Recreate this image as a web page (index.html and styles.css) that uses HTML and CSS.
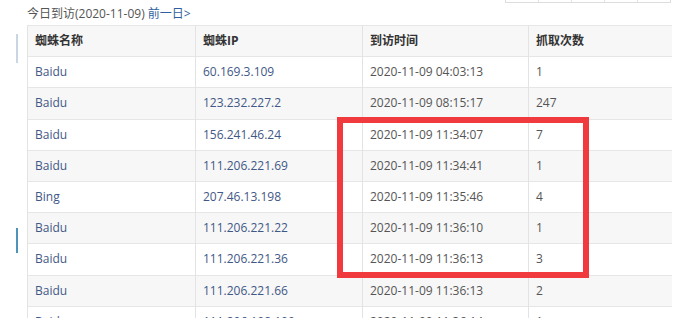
FILE: index.html
```html
<!DOCTYPE html>
<html lang="zh-CN">
<head>
<meta charset="utf-8">
<title>今日到访</title>
<link rel="stylesheet" href="styles.css">
</head>
<body>
<div class="page">
  <div class="gutter">
    <div class="mark mark-light"></div>
    <div class="mark mark-dark"></div>
  </div>
  <div class="main">
    <div class="pager"><span></span><span></span><span></span><span></span><span></span></div>
    <div class="title">今日到访(2020-11-09) <a class="prev">前一日&gt;</a></div>
    <table class="spiders">
      <colgroup><col class="c1"><col class="c2"><col class="c3"><col class="c4"></colgroup>
      <thead>
        <tr><th>蜘蛛名称</th><th>蜘蛛IP</th><th>到访时间</th><th>抓取次数</th></tr>
      </thead>
      <tbody>
        <tr><td class="lnk">Baidu</td><td class="lnk">60.169.3.109</td><td>2020-11-09 04:03:13</td><td>1</td></tr>
        <tr><td class="lnk">Baidu</td><td class="lnk">123.232.227.2</td><td>2020-11-09 08:15:17</td><td>247</td></tr>
        <tr><td class="lnk">Baidu</td><td class="lnk">156.241.46.24</td><td>2020-11-09 11:34:07</td><td>7</td></tr>
        <tr><td class="lnk">Baidu</td><td class="lnk">111.206.221.69</td><td>2020-11-09 11:34:41</td><td>1</td></tr>
        <tr><td class="lnk">Bing</td><td class="lnk">207.46.13.198</td><td>2020-11-09 11:35:46</td><td>4</td></tr>
        <tr><td class="lnk">Baidu</td><td class="lnk">111.206.221.22</td><td>2020-11-09 11:36:10</td><td>1</td></tr>
        <tr><td class="lnk">Baidu</td><td class="lnk">111.206.221.36</td><td>2020-11-09 11:36:13</td><td>3</td></tr>
        <tr><td class="lnk">Baidu</td><td class="lnk">111.206.221.66</td><td>2020-11-09 11:36:13</td><td>2</td></tr>
        <tr><td class="lnk">Baidu</td><td class="lnk">111.206.198.109</td><td>2020-11-09 11:36:14</td><td>1</td></tr>
      </tbody>
    </table>
    <div class="highlight"></div>
  </div>
</div>
</body>
</html>
```

FILE: styles.css
```css
html, body {
  margin: 0;
  padding: 0;
  background: #ffffff;
  height: 326px;
  overflow: hidden;
}
body {
  font-family: "Open Sans", "Noto Sans CJK SC", sans-serif;
  font-size: 12px;
  color: #555555;
}
.page {
  display: flex;
  position: relative;
  height: 318px;
  overflow: hidden;
}
.gutter {
  width: 16px;
  padding-right: 11px;
  flex: none;
}
.mark {
  width: 2px;
  margin-left: 16px;
}
.mark-light {
  margin-top: 34px;
  height: 29px;
  background: #c9d6e3;
}
.mark-dark {
  margin-top: 165px;
  height: 25px;
  background: #4f94b8;
}
.main {
  flex: none;
  width: 644px;
}
.pager {
  display: flex;
  margin-left: 478px;
  width: 164px;
  height: 2px;
  border: 1px solid #dddddd;
  border-top: none;
}
.pager span {
  flex: 1;
  border-left: 1px solid #e2e2e2;
}
.pager span:first-child {
  border-left: none;
}
.title {
  height: 22px;
  line-height: 22px;
  color: #555555;
  white-space: nowrap;
}
.prev {
  color: #2f5f9e;
}
.spiders {
  border-collapse: collapse;
  table-layout: fixed;
  width: 644px;
}
.c1 { width: 168px; }
.c2 { width: 167px; }
.c3 { width: 166px; }
.c4 { width: 143px; }
.spiders tr {
  height: 31.2px;
}
.spiders th,
.spiders td {
  padding: 0 7px;
  text-align: left;
  border-top: 1px solid #e6e6e6;
  border-left: 1px solid #e3e3e3;
  white-space: nowrap;
  line-height: 30px;
}
.spiders th {
  font-weight: bold;
  color: #333333;
  background: #f7f7f7;
}
.spiders tbody tr:nth-child(even) td {
  background: #f7f7f7;
}
.spiders td {
  color: #555555;
}
.spiders td.lnk {
  color: #3f5886;
}
.highlight {
  position: absolute;
  left: 337px;
  top: 117px;
  width: 240px;
  height: 149px;
  border: 6px solid #f03a3d;
}
```
